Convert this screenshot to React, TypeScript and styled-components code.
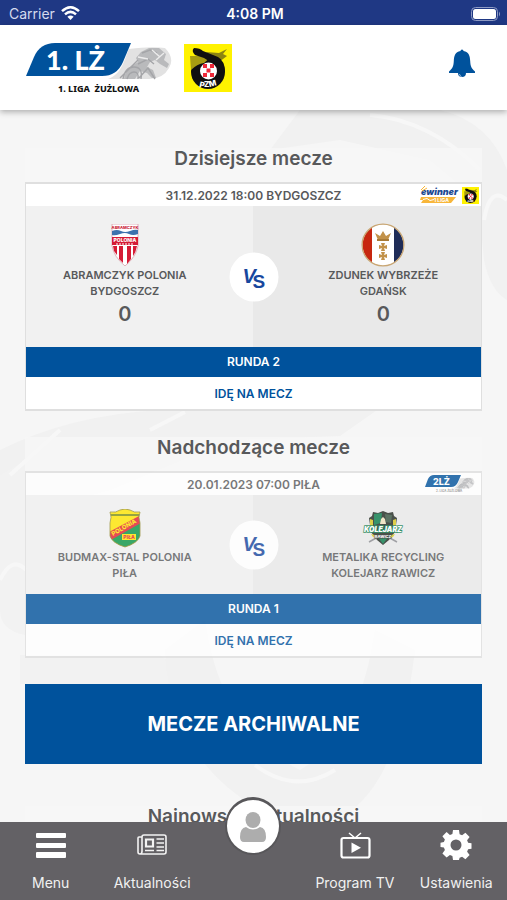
import React from "react";
import styled, { createGlobalStyle } from "styled-components";

const GlobalStyle = createGlobalStyle`
  * { box-sizing: border-box; }
  body { margin: 0; background: #f6f6f6; }
  button { font: inherit; border: 0; padding: 0; margin: 0; cursor: pointer; }
`;

const blue = "#00529c";
const ink = "#58595b";

const Shell = styled.div`
  display: flex;
  flex-direction: column;
  height: 100vh;
  font-family: Inter, "Liberation Sans", sans-serif;
  color: ${ink};
  background: #f6f6f6;
`;

const StatusBar = styled.div`
  display: grid;
  grid-template-columns: 1fr auto 1fr;
  align-items: center;
  height: 25px;
  padding: 2px 6px 0 9px;
  background: #1f3884;
  color: #fff;
  font-size: 14px;
  flex: none;
`;
const Carrier = styled.span`
  display: flex;
  align-items: center;
  gap: 6px;
  color: #d5dbee;
`;
const Clock = styled.span`
  font-weight: 600;
`;
const Battery = styled.span`
  display: flex;
  justify-content: flex-end;
`;

const Header = styled.header`
  display: flex;
  align-items: center;
  gap: 12px;
  height: 85px;
  padding: 0 32px 0 26px;
  background: #fff;
  box-shadow: 0 2px 6px rgba(0, 0, 0, 0.3);
  position: relative;
  z-index: 2;
  flex: none;
`;
const BellButton = styled.button`
  display: flex;
  margin: 0 0 8px auto;
  background: none;
`;

const Body = styled.div`
  position: relative;
  flex: 1;
  min-height: 0;
`;
const Backdrop = styled.svg`
  position: absolute;
  inset: 0;
  width: 100%;
  height: 100%;
`;
const Scroller = styled.main`
  position: relative;
  height: 100%;
  padding: 38px 25px 0;
  overflow-y: auto;
  scrollbar-width: none;
`;
const SectionTitle = styled.h2`
  margin: 0;
  height: 34px;
  line-height: 22px;
  font-size: 19px;
  font-weight: 600;
  text-align: center;
  background: rgba(247, 247, 247, 0.75);
`;

const Card = styled.article<{ $faded?: boolean }>`
  margin-bottom: 26px;
  border: 2px solid #dfdfdf;
  border-width: 2px 1px;
  opacity: ${(p) => (p.$faded ? 0.8 : 1)};
  font-size: 12px;
  font-weight: 600;
  text-align: center;
`;
const CardHead = styled.div`
  display: grid;
  grid-template-columns: 1fr auto 1fr;
  align-items: center;
  height: 22px;
  background: #fff;
  font-size: 12px;
`;
const CardDate = styled.time`
  grid-column: 2;
`;
const League = styled.span`
  display: flex;
  justify-content: flex-end;
  align-items: center;
  gap: 2px;
  padding-right: 2px;
`;
const Teams = styled.div<{ $scored?: boolean }>`
  position: relative;
  display: grid;
  grid-template-columns: 1fr 1fr;
  height: ${(p) => (p.$scored ? "141px" : "99px")};
  background: linear-gradient(90deg, #f1f1f1 50%, #e9e9e9 50%);
`;
const Team = styled.div<{ $side: "home" | "away" }>`
  display: flex;
  flex-direction: column;
  align-items: center;
  padding: ${(p) => (p.$side === "home" ? "0 36px 0 6px" : "0 0 0 32px")};
`;
const Crest = styled.div<{ $scored?: boolean }>`
  display: flex;
  align-items: center;
  height: ${(p) => (p.$scored ? "44px" : "38px")};
  margin: ${(p) => (p.$scored ? "17px 0 0" : "14px 0 2px")};
`;
const TeamName = styled.h3`
  margin: 0;
  font-size: 11px;
  line-height: 16px;
  font-weight: 600;
  white-space: pre-line;
`;
const Score = styled.strong`
  margin-top: 3px;
  font-size: 20px;
  line-height: 24px;
  font-weight: 600;
`;
const Versus = styled.div`
  position: absolute;
  left: 50%;
  top: 50%;
  width: 49px;
  height: 49px;
  transform: translate(-50%, -50%);
  border-radius: 50%;
  background: #fff;
`;
const Round = styled.div`
  height: 30px;
  line-height: 30px;
  background: ${blue};
  color: #fff;
`;
const GoButton = styled.button`
  display: block;
  width: 100%;
  height: 32px;
  background: #fff;
  color: ${blue};
`;
const ArchiveButton = styled.button`
  display: block;
  width: 100%;
  height: 80px;
  margin-bottom: 42px;
  background: ${blue};
  color: #fff;
  font-size: 20px;
  font-weight: 700;
`;

const Nav = styled.nav`
  position: relative;
  z-index: 3;
  display: grid;
  grid-template-columns: repeat(5, 1fr);
  height: 78px;
  background: #636165;
  flex: none;
`;
const NavButton = styled.button`
  display: flex;
  flex-direction: column;
  align-items: center;
  justify-content: space-between;
  padding: 7px 0 8px;
  background: none;
  color: #f1f1f1;
  font-size: 14px;
  line-height: 18px;
  white-space: nowrap;
`;
const ProfileButton = styled.button`
  justify-self: center;
  display: flex;
  align-items: center;
  justify-content: center;
  width: 56px;
  height: 58px;
  margin-top: -25px;
  border: 2px solid #58575a;
  border-top-width: 3px;
  border-radius: 50%;
  background: #fff;
`;

const svgFont = 'Inter, "Liberation Sans", sans-serif';

const Wifi = () => (
  <svg width="19" height="15" viewBox="0 0 19 15" fill="none" stroke="#fff" strokeWidth="2.5">
    <path d="M1 5.2Q9.5-2.6 18 5.2M4 8.4Q9.5 3.4 15 8.4" />
    <path d="M6.4 10.8Q9.5 8.2 12.6 10.8L9.5 14Z" fill="#fff" stroke="none" />
  </svg>
);

const BatteryIcon = () => (
  <svg width="30" height="14" viewBox="0 0 30 14">
    <rect x=".5" y=".5" width="26" height="13" rx="4" fill="none" stroke="#8f9bc4" />
    <rect x="2" y="2" width="23" height="10" rx="2.5" fill="#fff" />
    <path d="M28 4.5q2 2.5 0 5z" fill="#8f9bc4" />
  </svg>
);

const Rider = () => (
  <g>
    <path d="M82 37C96 32 98 18 103 7Q125 4 139 6Q149 16 143 26Q137 37 123 37Z" fill="#e2e2e2" />
    <path d="M98 37q2-12 11-15l3-2-2-4 5-6 8-4 10 0 7 6-2 6 5 4-2 4-7-4-5-4-5 2-3 5 6 3 3 8h-4l-5-5-7-2-5 8z" fill="#b9babc" />
    <g fill="none" stroke="#a4a5a8" strokeWidth="1.4">
      <path d="M97 37q2-12 11-12t7 12M101 37q2-7 7-7t4 7M94 36l18-18M112 22l10-5 6 5M116 11l8-3 7 3M113 36l9-10 7 11" />
      <path d="M126 8l8 7M130 18l8-7M112 15l10 2" stroke="#ececec" />
    </g>
  </g>
);

const LeagueLogo = () => (
  <svg width="146" height="52" viewBox="0 0 146 52" role="img" aria-label="1. Liga Żużlowa">
    <Rider />
    <path d="M0 34L8 15Q14 1 29 1H105L97 20Q91 34 76 34Z" fill={blue} />
    <text x="20" y="28" fill="#fff" fontFamily='Lato, sans-serif' fontWeight="900" fontSize="27">1. LŻ</text>
    <text x="32" y="50" fill="#111" fontFamily='"Noto Sans", sans-serif' fontWeight="800" fontSize="9" style={undefined} xmlSpace="preserve">1. LIGA  ŻUŻLOWA</text>
  </svg>
);

const PzmLogo = ({ size }: { size: number }) => (
  <svg width={size} height={size} viewBox="0 0 48 48" role="img" aria-label="PZM">
    <path d="M0 0H48V48H0Z" fill="#fff200" />
    <path d="M22 8L35 9 43 5 39 10 43 12 35 18 26 14z" fill="#8c8412" />
    <path d="M11 15L24 14 23 24H8z" fill="#807814" />
    <circle cx="24" cy="28" r="17" fill="#100f10" />
    <path d="M6 12H28L20 19Q13 20 7 26z" fill="#a79c12" />
    <path d="M10 4Q16 4 19 7L34 13Q41 17 41 28L32 30 31 21 20 14 11 11Q7 7 10 4Z" fill="#100f10" />
    <circle cx="24.5" cy="27" r="8.5" fill="#fff" />
    <path d="M19 20h4v4h-4zM26 20h4v4h-4zM22.500 24.500h4v4h-4zM19 29h4v4h-4zM26 29h4v4h-4z" fill="#ed2939" />
    <text x="24" y="43" textAnchor="middle" fill="#fff" fontFamily={svgFont} fontWeight="800" fontSize="8" rotate="12 0 -14">PZM</text>
  </svg>
);

const Bell = () => (
  <svg width="26" height="29" viewBox="0 0 26 29" fill={blue}>
    <path d="M11.5 2a1.500 1.500 0 0 1 3 0C20 3 21 7 21.200 12 21.500 17 22 19 26 22.500V24H17a4 4 0 0 1-8 0H0V22.500C4 19 4.500 17 4.800 12 5 7 6 3 11.500 2Z" />
    <path d="M10.500 25q0 2 2 2.500" fill="none" stroke="#fff" strokeWidth=".6" />
  </svg>
);

const EWinner = () => (
  <svg width="40" height="18" viewBox="0 0 40 18" role="img" aria-label="eWinner 1. Liga">
    <path d="M1 11H36L31 17H1l2-3H0z" fill="#f8b63a" />
    <path d="M3 13.500l4-1 3 2 4-1" stroke="#fff" fill="none" />
    <text x="1" y="9" fontFamily={svgFont} fontWeight="900" fontStyle="italic" fontSize="9" fill="#1d4992">ewinner</text>
    <text x="14" y="16" fontFamily={svgFont} fontWeight="700" fontSize="5" fill="#fff">1 LIGA</text>
    <path d="M1 4L5 0M2 5L7 2" stroke="#f8b63a" />
  </svg>
);

const SecondLeague = () => (
  <svg width="54" height="18" viewBox="0 0 54 18" role="img" aria-label="2. Liga Żużlowa">
    <g transform="translate(0 1) scale(.34)"><Rider /></g>
    <path d="M0 12L3 4Q5 0 9 0H36L33 7Q31 12 26 12Z" fill={blue} />
    <text x="8" y="10" fill="#fff" fontFamily={svgFont} fontWeight="800" fontSize="9">2LŻ</text>
    <text x="11" y="17" fill="#777" fontFamily={svgFont} fontSize="3">2. LIGA ŻUŻLOWA</text>
  </svg>
);

const Bydgoszcz = () => (
  <svg width="28" height="42" viewBox="0 0 28 42">
    <path d="M1 0H27V22Q25 33 14 42 3 33 1 22Z" fill="#fff" stroke="#d9a0aa" strokeWidth=".8" />
    <path d="M2 22H6V31L3 27zM8 22h4v17l-4-4zM16 22h4v13l-4 5zM22 22h4q-1 6-4 10z" fill="#d51b35" />
    <path d="M1 13H27V21H1z" fill="#d51b35" />
    <path d="M1 7q5-2 9 0t9 0 8-1v4q-5 2-9 0t-9 0-8 1z" fill="#3c72ae" />
    <text x="14" y="5" textAnchor="middle" fontFamily={svgFont} fontWeight="800" fontSize="4" fill="#cb2338">ABRAMCZYK</text>
    <text x="14" y="18" textAnchor="middle" fontFamily={svgFont} fontWeight="800" fontSize="5" fill="#fff">POLONIA</text>
    <path d="M5 20H23" stroke="#fff" strokeDasharray="2 1" />
  </svg>
);

const Gdansk = () => (
  <svg width="44" height="44" viewBox="0 0 44 44">
    <defs><clipPath id="gdRound"><circle cx="22" cy="22" r="20.5" /></clipPath></defs>
    <g clipPath="url(#gdRound)">
      <path d="M0 0H44V44H0z" fill="#fff" />
      <path d="M0 0H11V44H0z" fill="#c7270f" />
      <path d="M33 0H44V44H33z" fill="#1f2c57" />
    </g>
    <circle cx="22" cy="22" r="20.9" fill="none" stroke="#c9a673" strokeWidth="1.3" />
    <g fill="#c2924a">
      <path d="M14 10l5 3 3-5 3 5 5-3-3 7H17z" />
      <path d="M16 16h12v2H16z" fill="#a87a36" />
      <path d="M20 20h4l-1 3 3-1v4l-3-1 1 3h-4l1-3-3 1v-4l3 1zM20 29h4l-1 3 3-1v4l-3-1 1 3h-4l1-3-3 1v-4l3 1z" />
    </g>
  </svg>
);

const Pila = () => (
  <svg width="32" height="39" viewBox="0 0 32 39">
    <defs>
      <clipPath id="pilaShield"><path d="M1 3Q7 4 11 1Q16-1 21 1 25 4 31 3 29 8 31 14V27Q29 34 16 38 3 34 1 27V14Q3 8 1 3Z" /></clipPath>
    </defs>
    <g clipPath="url(#pilaShield)">
      <path d="M0 0H32V39H0z" fill="#ffe500" />
      <path d="M0 29L32 11V39H0z" fill="#0b9444" />
      <path d="M0 23L32 6V14L0 32z" fill="#e3202c" />
      <path d="M0 6H32" stroke="#54731c" strokeWidth="1.5" />
    </g>
    <path d="M1 3Q7 4 11 1Q16-1 21 1 25 4 31 3 29 8 31 14V27Q29 34 16 38 3 34 1 27V14Q3 8 1 3Z" fill="none" stroke="#8a8324" strokeWidth=".8" />
    <text transform="translate(4 27) rotate(-30)" fontFamily={svgFont} fontWeight="800" fontSize="6" fill="#ffe500">POLONIA</text>
    <path d="M13 25H27V31H13z" fill="#ffe500" />
    <text x="20" y="30" textAnchor="middle" fontFamily={svgFont} fontWeight="800" fontSize="5" fill="#e3202c">PIŁA</text>
  </svg>
);

const Rawicz = () => (
  <svg width="42" height="34" viewBox="0 0 42 34">
    <path d="M11 1l5 1 5-2 5 2 5-1 1 4 3 2-2 14-6 8-6 5-6-5-6-8L7 7l3-2z" fill="#202820" />
    <path d="M8 8l3 1v6H8zM34 8l-3 1v6h3zM9 23l4 1 2 4-4-2zM33 23l-4 1-2 4 4-2z" fill="#d8c51e" />
    <path d="M12 3l8-1-1 10-7 2zM15 25h12l-6 8z" fill="#087b49" />
    <path d="M23 3l7 1-1 8-5-1z" fill="#36533f" />
    <path d="M19 8l2-2 2 2 1 5h-6z" fill="#f0e3bc" />
    <path d="M7 31l9-5M35 31l-9-5" stroke="#8b8c91" strokeWidth="1.5" />
    <text x="21" y="21" textAnchor="middle" fontFamily={svgFont} fontWeight="900" fontStyle="italic" fontSize="7" fill="#fff" stroke="#087b49" strokeWidth="1.6" paintOrder="stroke">KOLEJARZ</text>
    <text x="21" y="27" textAnchor="middle" fontFamily={svgFont} fontWeight="800" fontSize="4" fill="#fff" stroke="#202820" strokeWidth="1" paintOrder="stroke">RAWICZ</text>
  </svg>
);

const VsMark = () => (
  <svg width="49" height="49" viewBox="0 0 49 49" role="img" aria-label="VS">
    <text x="13" y="35" fontFamily='"Liberation Sans", sans-serif' fontWeight="700" fontSize="19" fill="#17479e">
      <tspan y="30" fontSize="20" fontStyle="italic">V</tspan>
      <tspan x="23" y="35" fontSize="19">S</tspan>
    </text>
  </svg>
);

const MenuIcon = () => (
  <svg width="32" height="32" viewBox="0 0 32 32" fill="#fff">
    <rect x="1" y="4" width="30" height="5" rx="1" />
    <rect x="1" y="14" width="30" height="5" rx="1" />
    <rect x="1" y="23" width="30" height="6" rx="1" />
  </svg>
);
const NewsIcon = () => (
  <svg width="32" height="32" viewBox="0 0 32 32" fill="none" stroke="#f3f3f3" strokeWidth="1.6">
    <path d="M6 23V8Q6 6 8 6H28Q30 6 30 8V23Q30 25 28 25H4Q2 25 2 23V9Q2 8 3 8H6M6 22Q6 25 4 25M9 21.500H18M20.500 21.500H28M20.500 10H28M20.500 14H28M20.500 18H28" />
    <path d="M10 10.500H17V17.500H10z" strokeWidth="2.2" />
  </svg>
);
const TvIcon = () => (
  <svg width="32" height="32" viewBox="0 0 32 32" fill="none" stroke="#fff">
    <rect x="2.5" y="9" width="28" height="19.5" rx="2" strokeWidth="2.2" />
    <path d="M10 4L16 9L22 4" strokeWidth="1.5" />
    <path d="M12.500 13.500V24L22 18.700z" fill="#fff" stroke="none" />
  </svg>
);
const GearIcon = () => (
  <svg width="32" height="32" viewBox="0 0 32 32">
    <path fillRule="evenodd" fill="#fff" d="M13 1h6l.6 4.200 2.500 1 3.300-2.500 4.200 4.200-2.500 3.300 1 2.500 3.400.6v5.400l-3.400.6-1 2.500 2.500 3.300-4.200 4.200-3.300-2.500-2.500 1L19 31h-6l-.6-3.900-2.500-1-3.300 2.500-4.200-4.200 2.500-3.300-1-2.500L.5 18v-4.300l3.400-.6 1-2.500-2.500-3.300 4.200-4.200L9.900 6l2.500-1zM16 10.500a5.500 5.500 0 1 0 0 11 5.500 5.500 0 1 0 0-11z" />
  </svg>
);
const ProfileIcon = () => (
  <svg width="28" height="32" viewBox="0 0 28 32" fill="#adadad">
    <ellipse cx="14" cy="9" rx="7.5" ry="8" />
    <path d="M1 26Q1 17 7 16Q14 21 21 16Q27 17 27 26Q27 31 23 31H5Q1 31 1 26Z" />
  </svg>
);

const Watermark = () => (
  <Backdrop viewBox="0 0 507 712" preserveAspectRatio="xMidYMid slice" aria-hidden="true">
    <path d="M300 0H440Q490 12 507 60V190Q490 180 484 150L478 90 430 50 340 30 270 40Z" fill="#f1f1f1" />
    <path d="M0 340Q70 305 160 300L380 298 340 326 230 330 110 380 0 410Z" fill="#f1f1f1" />
    <path d="M0 365L25 350V525Q0 520 0 500Z" fill="#f2f2f2" />
    <path d="M20 545H160L200 574H20Z" fill="#f2f2f2" />
    <path d="M165 540Q170 655 270 705H345Q400 670 415 540L375 520Q360 625 300 660 220 620 205 510Z" fill="#f1f1f1" />
    <g fill="none" stroke="#f7f7f7" strokeWidth="4">
      <path d="M370 5Q430 10 480 60M484 110Q490 75 507 90M10 365L60 320M150 320L185 302M0 470Q12 445 26 460" />
      <path d="M255 655Q295 685 335 660" />
    </g>
  </Backdrop>
);

type TeamInfo = { name: string; crest: React.ReactNode; score?: number };
type Match = { date: string; iso: string; league: React.ReactNode; home: TeamInfo; away: TeamInfo; round: string; faded?: boolean };

const TeamPanel = ({ team, side }: { team: TeamInfo; side: "home" | "away" }) => {
  const scored = team.score !== undefined;
  return (
    <Team $side={side}>
      <Crest $scored={scored}>{team.crest}</Crest>
      <TeamName>{team.name}</TeamName>
      {scored && <Score>{team.score}</Score>}
    </Team>
  );
};

const MatchCard = ({ match }: { match: Match }) => (
  <Card $faded={match.faded}>
    <CardHead>
      <CardDate dateTime={match.iso}>{match.date}</CardDate>
      <League>{match.league}</League>
    </CardHead>
    <Teams $scored={match.home.score !== undefined}>
      <TeamPanel team={match.home} side="home" />
      <TeamPanel team={match.away} side="away" />
      <Versus><VsMark /></Versus>
    </Teams>
    <Round>{match.round}</Round>
    <GoButton type="button">IDĘ NA MECZ</GoButton>
  </Card>
);

const today: Match = {
  date: "31.12.2022 18:00 BYDGOSZCZ",
  iso: "2022-12-31T18:00",
  league: <><EWinner /><PzmLogo size={17} /></>,
  home: { name: "ABRAMCZYK POLONIA\nBYDGOSZCZ", crest: <Bydgoszcz />, score: 0 },
  away: { name: "ZDUNEK WYBRZEŻE\nGDAŃSK", crest: <Gdansk />, score: 0 },
  round: "RUNDA 2",
};
const upcoming: Match = {
  date: "20.01.2023 07:00 PIŁA",
  iso: "2023-01-20T07:00",
  league: <SecondLeague />,
  home: { name: "BUDMAX-STAL POLONIA\nPIŁA", crest: <Pila /> },
  away: { name: "METALIKA RECYCLING\nKOLEJARZ RAWICZ", crest: <Rawicz /> },
  round: "RUNDA 1",
  faded: true,
};

export default function App() {
  return (
    <Shell>
      <GlobalStyle />
      <StatusBar>
        <Carrier>Carrier <Wifi /></Carrier>
        <Clock>4:08 PM</Clock>
        <Battery><BatteryIcon /></Battery>
      </StatusBar>
      <Header>
        <LeagueLogo />
        <PzmLogo size={48} />
        <BellButton type="button" aria-label="Powiadomienia"><Bell /></BellButton>
      </Header>
      <Body>
        <Watermark />
        <Scroller>
          <SectionTitle>Dzisiejsze mecze</SectionTitle>
          <MatchCard match={today} />
          <SectionTitle>Nadchodzące mecze</SectionTitle>
          <MatchCard match={upcoming} />
          <ArchiveButton type="button">MECZE ARCHIWALNE</ArchiveButton>
          <SectionTitle>Najnowsze aktualności</SectionTitle>
        </Scroller>
      </Body>
      <Nav>
        <NavButton type="button"><MenuIcon />Menu</NavButton>
        <NavButton type="button"><NewsIcon />Aktualności</NavButton>
        <ProfileButton type="button" aria-label="Profil"><ProfileIcon /></ProfileButton>
        <NavButton type="button"><TvIcon />Program TV</NavButton>
        <NavButton type="button"><GearIcon />Ustawienia</NavButton>
      </Nav>
    </Shell>
  );
}
